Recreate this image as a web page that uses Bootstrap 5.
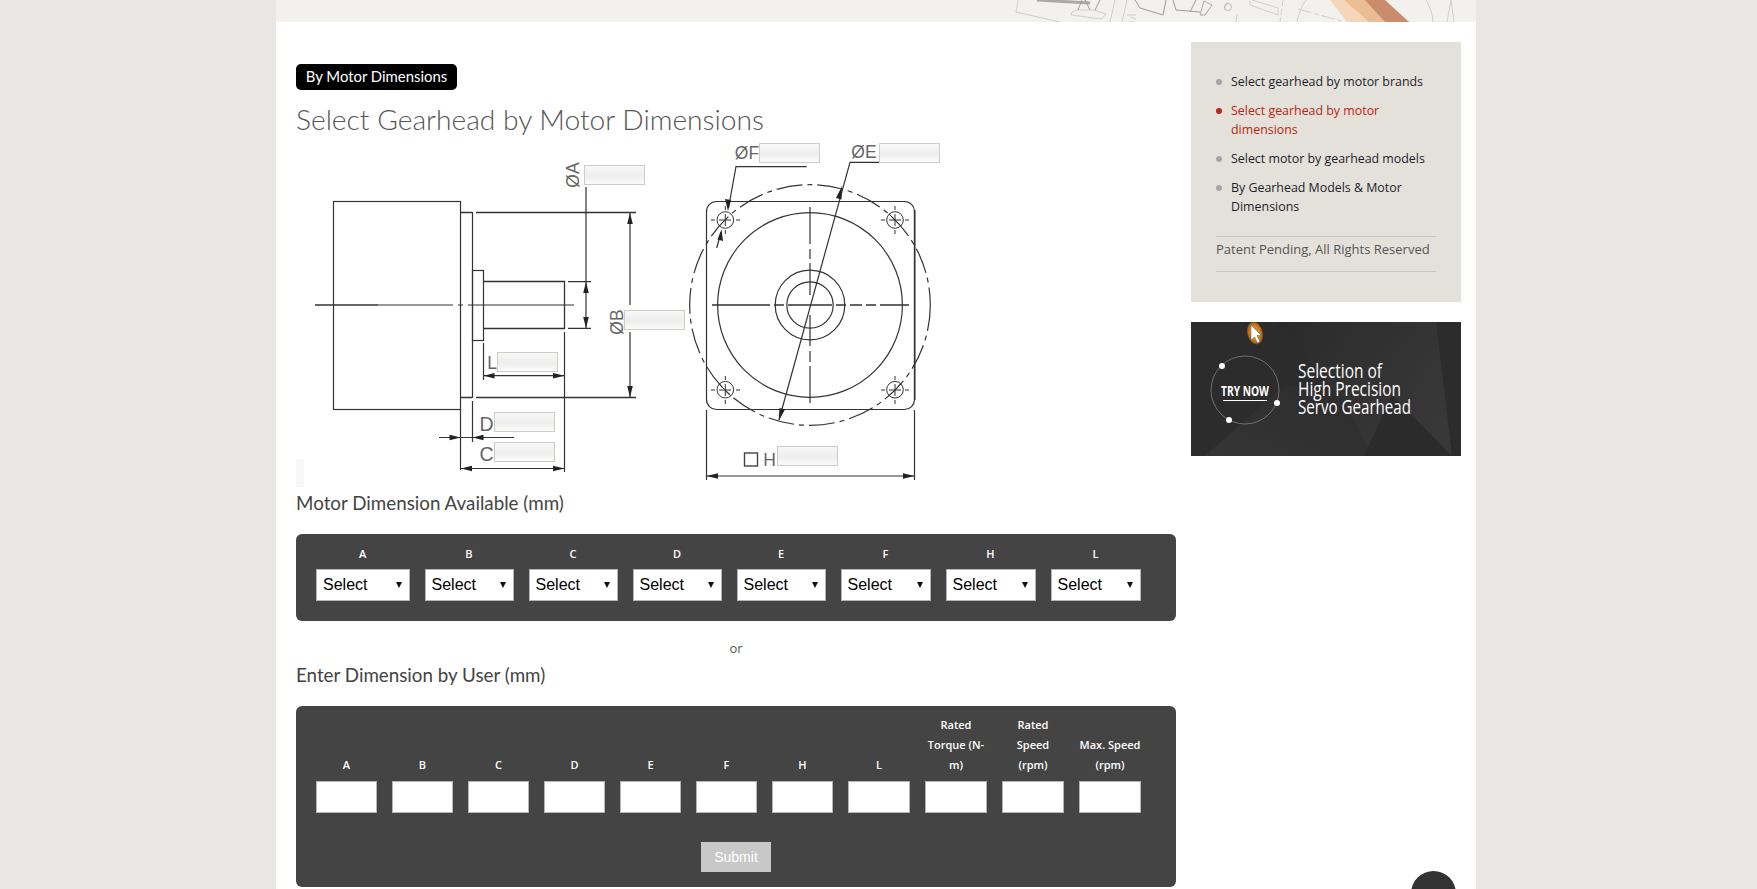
<!DOCTYPE html>
<html lang="en">
<head>
<meta charset="utf-8">
<title>Select Gearhead by Motor Dimensions</title>
<link rel="stylesheet" href="https://cdn.jsdelivr.net/npm/bootstrap@5.3.0/dist/css/bootstrap.min.css">
<script src="https://cdn.jsdelivr.net/npm/bootstrap@5.3.0/dist/js/bootstrap.bundle.min.js"></script>
<style>
html,body{height:889px;overflow:hidden}
body{background:#e8e7e3;padding-right:5px;font-family:"Open Sans","Liberation Sans",sans-serif;color:#444}
.sheet{width:1200px;height:889px;background:#fff;overflow:hidden}
.topband{height:22px;background:#f2f1ee}
.topband svg{display:block}
.main-col{width:880px;margin-left:20px}
.side-col{width:270px;margin-left:15px;margin-top:20px}
.tagpill{margin-top:42px;height:26px;width:161px;background:#000;color:#fff;border-radius:5px;font:400 14.9px/25px Lato,sans-serif;text-align:center}
.page-title{font:300 28.2px/38px Lato,sans-serif;color:#555;margin:10px 0 2px;height:38px}
.drawing{width:660px;height:350px}
.drawing svg{display:block}
.drawing text{font-family:"Liberation Sans",sans-serif;font-size:17.5px;fill:#666}
.drawing text.bigmark{font-size:19.5px}
.dimbox{position:absolute;width:61px;height:20px;padding:0;border:1px solid #cfccc2;border-radius:0;background:linear-gradient(#f8f8f8,#eeeeee 55%,#fbfbfb)}
.dim-a{left:288px;top:25px}.dim-b{left:328px;top:170px}.dim-l{left:201px;top:212px}
.dim-d{left:198px;top:272px}.dim-c{left:198px;top:302px}.dim-f{left:463px;top:3px}
.dim-e{left:583px;top:3px}.dim-h{left:481px;top:306px}
.sect-head{font:400 18.8px/26px Lato,sans-serif;color:#444;margin:0 0 18px;height:26px}
.darkpanel{background:#444;border-radius:6px;padding:10px 20px 20px;color:#fff}
.dark-one{height:87px;margin-bottom:17px}
.dark-two{height:181px;padding-bottom:15px}
.grid-one,.grid-two{display:grid;column-gap:15px;width:825px}
.grid-one{grid-template-columns:93.5px 89px 89px 89px 89px 90px 90px 90px}
.grid-two{grid-template-columns:61px 61px 61px 61px 61px 61px 61px 62px 62px 62px 62px}
.fieldlabel{font:600 11px/19px "Open Sans",sans-serif;color:#fff;text-align:center;margin-bottom:6px;white-space:nowrap}
.grid-two .fieldlabel{height:60px;line-height:20px;padding-bottom:1px;margin-bottom:5px;display:flex;align-items:flex-end;justify-content:center}
.pick.form-select{height:32px;width:100%;padding:0 0 0 6px;border:1px solid #b5b5b5;border-radius:0;font:400 16px/30px "Liberation Sans",sans-serif;color:#000;background-color:#fff;background-image:url("data:image/svg+xml,%3Csvg xmlns='http://www.w3.org/2000/svg' width='6' height='6'%3E%3Cpath d='M0 0h6L3 6z' fill='%23111'/%3E%3C/svg%3E");background-size:6px 6px;background-position:right 7px center;background-repeat:no-repeat}
.numbox.form-control{height:32px;width:100%;padding:0 4px;border:1px solid #b5b5b5;border-radius:0;background:#fff}
.ortext{font-size:13px;line-height:20px;height:20px;color:#555}
.headtwo{margin-top:4px}
.sendbtn.btn{width:70px;height:30px;padding:0;border:0;border-radius:0;background:#c8c8c8;color:#fff;font:400 14px/30px "Liberation Sans",sans-serif;margin-top:29px}
.sidebox{background:#e4e1da;height:260px;padding:30px 25px}
.sidelinks{margin:0 0 20px;padding:0}
.sidelinks li{position:relative;padding-left:15px;margin-bottom:10px;font:400 12.4px/19px "Open Sans",sans-serif}
.sidelinks li::before{content:"";position:absolute;left:0;top:7px;width:6px;height:6px;border-radius:50%;background:#a5a5a5}
.sidelinks li a{color:#1d1d2b;text-decoration:none}
.sidelinks li.now::before{background:#bf2412}
.sidelinks li.now a{color:#bf2412}
.patentline{border-top:1px solid #c9c7c4;border-bottom:1px solid #c9c7c4;font:400 13px/19px "Open Sans",sans-serif;color:#555;padding:3px 0 12px;white-space:nowrap}
.promo{margin-top:20px;height:134px}
.promo svg{display:block}
.promo text{fill:#fff;font-family:"Open Sans",sans-serif}
.uptop{position:fixed;left:1411px;top:871px;width:45px;height:45px;border-radius:50%;background:#333}
</style>
</head>
<body>
<div class="sheet ms-auto me-auto">
  <div class="topband">
    <svg width="1200" height="22" viewBox="276 0 1200 22" aria-hidden="true">
      <g fill="none" stroke="#cfcfcc" stroke-width="1">
        <path d="M1018 0L1016 12L1060 22"/>
        <path d="M1072 12L1071 15L1102 19L1106 14L1094 10L1077 10Z"/>
        <path d="M1110 22L1115 0M1122 22L1127 0"/>
        <path d="M1127 15H1136M1128 22H1135M1130 17L1136 19"/>
        <path d="M1236 22L1237 14M1227 2L1224 10"/>
        <path d="M1250 5L1278 15V8L1252 0M1250 5V0"/>
        <path d="M1283 0L1280 22" stroke-dasharray="6 3"/>
        <path d="M1306 0Q1300 8 1297 22"/>
        <path d="M1298 9L1345 22" stroke-dasharray="14 3 4 3"/>
        <path d="M1426 0Q1432 9 1433 22M1451 0L1447 22M1451 0L1454 22"/>
      </g>
      <g fill="none" stroke="#9c9c9a" stroke-width="1">
        <path d="M1037 0L1090 3" stroke-width="3" stroke="#a9a9a7"/>
        <path d="M1078 10L1082 0M1090 10L1085 0M1095 10L1100 0"/>
        <path d="M1135 0L1140 8L1163 15L1166 0"/>
        <path d="M1173 0L1176 10L1200 12M1190 12L1196 0"/>
        <path d="M1200 15L1204 1L1212 5L1205 15Z" stroke="#aaa"/>
        <circle cx="1228" cy="7" r="3.500" stroke="#bbb"/>
      </g>
      <path d="M1330 0H1350L1376 22H1347Z" fill="#f6d6b9"/>
      <path d="M1344 0H1367L1387 22H1369Z" fill="#eabd94"/>
      <path d="M1365 0H1385L1409 22H1385Z" fill="#c98c6c"/>
    </svg>
  </div>
  <div class="d-flex">
    <div class="main-col">
      <div class="tagpill">By Motor Dimensions</div>
      <h1 class="page-title">Select Gearhead by Motor Dimensions</h1>
      <div class="drawing position-relative">
        <svg width="660" height="350" viewBox="296 140 660 350" aria-hidden="true">
          <rect x="296" y="459" width="8" height="28" fill="#f8f8f8"/>
          <g fill="none" stroke="#333" stroke-width="1.200">
            <rect x="333.500" y="201.500" width="127" height="208"/>
            <path d="M461 212.500H472M476 212.500H636M461 397.500H472M476 397.500H636" stroke-width="1.400"/>
            <path d="M472.500 212V398M472.500 401V442M460.500 409V470"/>
            <rect x="472.500" y="270.500" width="11" height="70"/>
            <path d="M484 281.500H564.500V328.500H484" stroke-width="1.300"/>
            <path d="M315 305H378" stroke-width="1.400"/>
            <path d="M378 305H453M458 305H463M468 305H574"/>
            <path d="M568 281.700H591M568 328.300H591M586 187V328"/>
            <path d="M630 213V305M630 332V397"/>
            <path d="M483.500 343V380M564.500 332V472M484 375.700H564M439 437.500H514M461 468.500H564"/>
            <rect x="706.500" y="201.500" width="208" height="208" rx="10"/>
            <path d="M914.700 210V400" stroke-width="1.600"/>
            <circle cx="810" cy="305" r="92.400"/>
            <circle cx="810" cy="305" r="34.800"/>
            <circle cx="810" cy="305" r="23.200"/>
            <circle cx="810" cy="305" r="120.300" stroke-dasharray="26 5 5 5"/>
            <path d="M712 305H770M774 305H784M788 305H832M836 305H846M850 305H862M866 305H876M880 305H909" stroke-width="1.400"/>
            <path d="M810 207V244M810 249V259M810 263V295M810 315V346M810 351V362M810 366V403" stroke-width="1.200"/>
            <path d="M706.500 410V480M914.500 410V480M706 476H915"/>
            <rect x="744.500" y="453" width="13" height="13" stroke="#444" stroke-width="1.400"/>
            <path d="M806.700 166.700H736L728.500 208M716.700 248L721 232"/>
            <path d="M879 162.300H850L779 420"/>
            <g stroke-width="1">
              <circle cx="725.300" cy="220" r="8.300"/>
              <path d="M719 220H731M725.300 214V226M711 220H715M736 220H740M725.300 206V210M725.300 230V234"/>
              <circle cx="895" cy="220" r="8.300"/>
              <path d="M889 220H901M895 214V226M881 220H885M905 220H909M895 206V210M895 230V234M889 214L901 226"/>
              <circle cx="725.300" cy="389.700" r="8.300"/>
              <path d="M719 390H731M725.300 384V396M711 390H715M736 390H740M725.300 376V380M725.300 400V404M719 384L731 396"/>
              <circle cx="895" cy="389.700" r="8.300"/>
              <path d="M889 390H901M895 384V396M881 390H885M905 390H909M895 376V380M895 400V404M901 384L889 396"/>
            </g>
          </g>
          <g fill="#222">
            <path d="M586 282L583.200 293H588.800ZM586 328L583.200 317H588.800Z"/>
            <path d="M630 213L627.200 224H632.800ZM630 397L627.200 386H632.800Z"/>
            <path d="M484 375.700L494.500 373V378.400ZM564.500 375.700L553 373V378.400Z"/>
            <path d="M460.500 437.500L449.500 434.800V440.200ZM472.500 437.500L483.500 434.800V440.200Z"/>
            <path d="M461 468.500L472 465.800V471.200ZM564.500 468.500L553 465.800V471.200Z"/>
            <path d="M706.500 476L718 473.300V478.700ZM914.500 476L903 473.300V478.700Z"/>
            <path d="M728 211L725 199L731 200ZM721.500 229.500L723 241L717.500 239.500Z"/>
            <path d="M842 186L836 198L841.500 199.500ZM778.700 421L779.500 408L785 409.500Z"/>
          </g>
          <text x="579" y="175" text-anchor="middle" transform="rotate(-90 579 175)">ØA</text>
          <text x="623" y="322" text-anchor="middle" transform="rotate(-90 623 322)">ØB</text>
          <text x="492" y="369" text-anchor="middle">L</text>
          <text class="bigmark" x="486.500" y="431" text-anchor="middle">D</text>
          <text class="bigmark" x="486.500" y="461" text-anchor="middle">C</text>
          <text x="747" y="159" text-anchor="middle">ØF</text>
          <text x="864" y="158" text-anchor="middle">ØE</text>
          <text x="769.500" y="465.500" text-anchor="middle">H</text>
        </svg>
        <input class="dimbox dim-a" type="text" aria-label="A">
        <input class="dimbox dim-b" type="text" aria-label="B">
        <input class="dimbox dim-l" type="text" aria-label="L">
        <input class="dimbox dim-d" type="text" aria-label="D">
        <input class="dimbox dim-c" type="text" aria-label="C">
        <input class="dimbox dim-f" type="text" aria-label="F">
        <input class="dimbox dim-e" type="text" aria-label="E">
        <input class="dimbox dim-h" type="text" aria-label="H">
      </div>
      <h2 class="sect-head">Motor Dimension Available (mm)</h2>
      <div class="darkpanel dark-one">
        <div class="grid-one">
          <div><div class="fieldlabel">A</div><select class="form-select pick"><option>Select</option></select></div>
          <div><div class="fieldlabel">B</div><select class="form-select pick"><option>Select</option></select></div>
          <div><div class="fieldlabel">C</div><select class="form-select pick"><option>Select</option></select></div>
          <div><div class="fieldlabel">D</div><select class="form-select pick"><option>Select</option></select></div>
          <div><div class="fieldlabel">E</div><select class="form-select pick"><option>Select</option></select></div>
          <div><div class="fieldlabel">F</div><select class="form-select pick"><option>Select</option></select></div>
          <div><div class="fieldlabel">H</div><select class="form-select pick"><option>Select</option></select></div>
          <div><div class="fieldlabel">L</div><select class="form-select pick"><option>Select</option></select></div>
        </div>
      </div>
      <div class="ortext text-center">or</div>
      <h2 class="sect-head headtwo">Enter Dimension by User (mm)</h2>
      <div class="darkpanel dark-two">
        <div class="grid-two">
          <div><div class="fieldlabel"><span>A</span></div><input class="form-control numbox" type="text" aria-label="A"></div>
          <div><div class="fieldlabel"><span>B</span></div><input class="form-control numbox" type="text" aria-label="B"></div>
          <div><div class="fieldlabel"><span>C</span></div><input class="form-control numbox" type="text" aria-label="C"></div>
          <div><div class="fieldlabel"><span>D</span></div><input class="form-control numbox" type="text" aria-label="D"></div>
          <div><div class="fieldlabel"><span>E</span></div><input class="form-control numbox" type="text" aria-label="E"></div>
          <div><div class="fieldlabel"><span>F</span></div><input class="form-control numbox" type="text" aria-label="F"></div>
          <div><div class="fieldlabel"><span>H</span></div><input class="form-control numbox" type="text" aria-label="H"></div>
          <div><div class="fieldlabel"><span>L</span></div><input class="form-control numbox" type="text" aria-label="L"></div>
          <div><div class="fieldlabel"><span>Rated<br>Torque (N-<br>m)</span></div><input class="form-control numbox" type="text" aria-label="Rated Torque"></div>
          <div><div class="fieldlabel"><span>Rated<br>Speed<br>(rpm)</span></div><input class="form-control numbox" type="text" aria-label="Rated Speed"></div>
          <div><div class="fieldlabel"><span>Max. Speed<br>(rpm)</span></div><input class="form-control numbox" type="text" aria-label="Max Speed"></div>
        </div>
        <div class="text-center"><button class="btn sendbtn" type="button">Submit</button></div>
      </div>
    </div>
    <div class="side-col">
      <div class="sidebox">
        <ul class="sidelinks list-unstyled">
          <li><a href="#">Select gearhead by motor brands</a></li>
          <li class="now"><a href="#">Select gearhead by motor dimensions</a></li>
          <li><a href="#">Select motor by gearhead models</a></li>
          <li><a href="#">By Gearhead Models &amp; Motor Dimensions</a></li>
        </ul>
        <div class="patentline">Patent Pending, All Rights Reserved</div>
      </div>
      <div class="promo">
        <svg width="270" height="134" viewBox="1191 322 270 134" role="img" aria-label="Try now">
          <defs>
            <radialGradient id="glow"><stop offset=".55" stop-color="#d78a1e"/><stop offset=".85" stop-color="#a8641a"/><stop offset="1" stop-color="#3a3028"/></radialGradient>
            <linearGradient id="shadeA" x1="0" y1="0" x2="1" y2=".6"><stop offset="0" stop-color="#2a2a2a"/><stop offset="1" stop-color="#383838"/></linearGradient>
            <linearGradient id="shadeB" x1="0" y1="1" x2="1" y2="0"><stop offset="0" stop-color="#353535"/><stop offset="1" stop-color="#2c2c2c"/></linearGradient>
          </defs>
          <rect x="1191" y="322" width="270" height="134" fill="#2c2c2c"/>
          <path d="M1275 322H1436L1452 456H1370Q1350 400 1275 322Z" fill="url(#shadeA)"/>
          <path d="M1205 456L1285 385L1340 392L1372 456Z" fill="url(#shadeB)"/>
          <path d="M1364 456L1392 395L1452 456Z" fill="#2b2b2b"/>
          <ellipse cx="1255" cy="333" rx="8" ry="12" transform="rotate(-14 1255 333)" fill="url(#glow)"/>
          <path d="M1251 325V340L1254.500 337L1257.500 343L1260 341.500L1257 335.500H1261.500Z" fill="#fff" stroke="#555" stroke-width=".5"/>
          <circle cx="1245" cy="390" r="34" fill="none" stroke="#6f6f6f" stroke-width="1"/>
          <circle cx="1222" cy="366" r="3" fill="#fff"/>
          <circle cx="1277" cy="403" r="3" fill="#fff"/>
          <circle cx="1229" cy="420" r="3" fill="#fff"/>
          <text x="1221" y="396" font-size="15" font-weight="700" textLength="48" lengthAdjust="spacingAndGlyphs">TRY NOW</text>
          <path d="M1223 400.500H1267" stroke="#fff" stroke-width="1"/>
          <g font-size="19.500">
            <text x="1298" y="378" textLength="84" lengthAdjust="spacingAndGlyphs">Selection of</text>
            <text x="1298" y="396" textLength="103" lengthAdjust="spacingAndGlyphs">High Precision</text>
            <text x="1298" y="414" textLength="113" lengthAdjust="spacingAndGlyphs">Servo Gearhead</text>
          </g>
        </svg>
      </div>
    </div>
  </div>
</div>
<div class="uptop"></div>
</body>
</html>
